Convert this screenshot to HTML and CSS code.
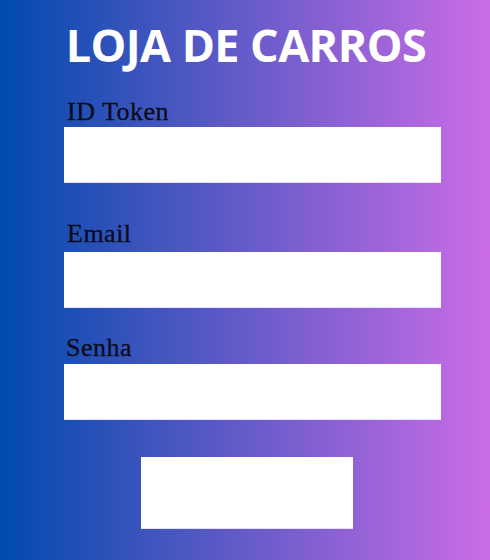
FILE: index.html
```html
<!DOCTYPE html>
<html lang="pt">
<head>
<meta charset="utf-8">
<title>Loja de Carros</title>
<link rel="stylesheet" href="styles.css">
</head>
<body>
<main class="page">
  <h1 class="title">LOJA DE CARROS</h1>
  <form class="form">
    <div class="field field-token">
      <label class="label" for="token">ID Token</label>
      <input class="input" id="token" type="text">
    </div>
    <div class="field field-email">
      <label class="label" for="email">Email</label>
      <input class="input input-email" id="email" type="email">
    </div>
    <div class="field field-senha">
      <label class="label label-senha" for="senha">Senha</label>
      <input class="input" id="senha" type="password">
    </div>
    <div class="actions">
      <button class="submit" type="button"></button>
    </div>
  </form>
</main>
</body>
</html>
```
FILE: styles.css
```css
html, body {
  margin: 0;
  padding: 0;
  height: 100%;
}
body {
  background: linear-gradient(to right, #004aad, #cb6ce6);
  overflow: hidden;
}
.page {
  width: 490px;
  height: 560px;
  box-sizing: border-box;
  padding-top: 22px;
}
.title {
  margin: 0;
  font-family: "Open Sans", sans-serif;
  font-weight: 700;
  font-size: 45px;
  line-height: 46px;
  letter-spacing: -0.6px;
  color: #ffffff;
  text-align: center;
  padding-left: 2px;
}
.form {
  display: flex;
  flex-direction: column;
  padding-left: 64px;
  width: 377px;
}
.field {
  display: flex;
  flex-direction: column;
}
.field-token { margin-top: 31px; }
.field-email { margin-top: 38px; }
.field-senha { margin-top: 27px; }
.label {
  font-family: "Liberation Serif", serif;
  font-size: 26px;
  line-height: 26px;
  letter-spacing: 0.5px;
  -webkit-text-stroke: 0.3px #0b0b1a;
  color: #0b0b1a;
  padding-left: 3px;
  margin-bottom: 2px;
}
.field-email .label { margin-bottom: 5px; }
.field-senha .label { margin-bottom: 3px; padding-left: 2px; }
.input {
  display: block;
  width: 377px;
  height: 56px;
  box-sizing: border-box;
  margin: 0;
  border: none;
  border-bottom: 1px solid rgba(230, 220, 250, 0.9);
  background: #ffffff;
  outline: none;
}
.actions {
  display: flex;
  margin-top: 37px;
  padding-left: 77px;
}
.submit {
  width: 212px;
  height: 72px;
  margin: 0;
  padding: 0;
  border: none;
  border-bottom: 1px solid rgba(230, 220, 250, 0.9);
  background: #ffffff;
}
```
